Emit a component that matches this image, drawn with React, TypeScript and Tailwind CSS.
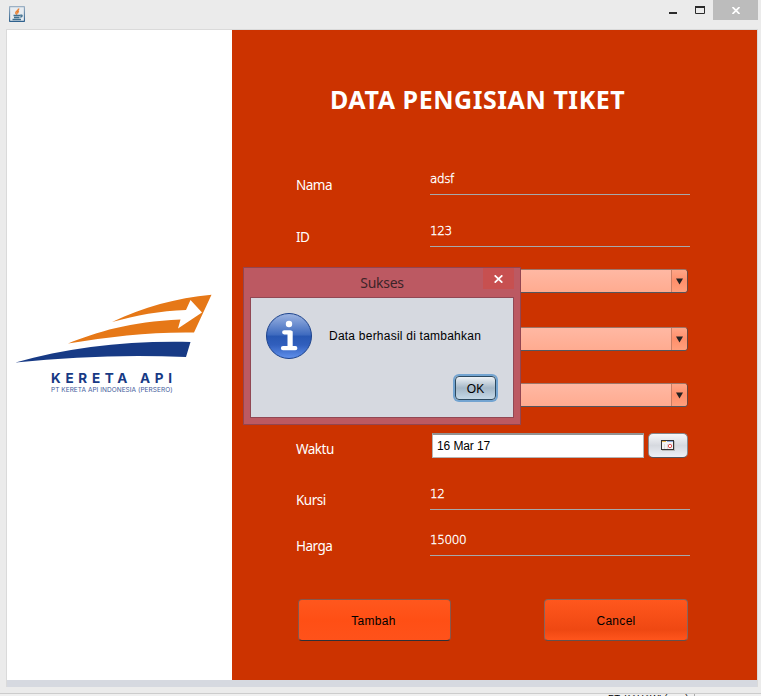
import type { ReactNode } from 'react';

const sans = "[font-family:'Liberation_Sans',Arial,sans-serif]";
const humanist = "[font-family:'Noto_Sans',sans-serif]";
const geometric = "[font-family:'DejaVu_Sans_Light','DejaVu_Sans',sans-serif]";
const grotesque = "[font-family:'Inter',sans-serif]";

function JavaIcon() {
  return (
    <svg width="16" height="16" viewBox="0 0 16 16">
      <defs>
        <linearGradient id="java-frame" x1="0" y1="0" x2="0" y2="1">
          <stop offset="0" stopColor="#9bb0c4" />
          <stop offset="1" stopColor="#2f618d" />
        </linearGradient>
      </defs>
      <rect x="0.5" y="0.5" width="15" height="15" rx="1" fill="#e7ecf1" stroke="url(#java-frame)" strokeWidth="1.300" />
      <path d="M9.700 2.500C10 4.500 6.500 5 6.800 7c.1.7.7 1 1.100 1.600M9.800 5C8.500 5.700 8.400 6.500 8.900 7.500" fill="none" stroke="#ea8132" strokeWidth="1.500" />
      <path d="M4.500 9.500h7M5 11.500h5.500M3.500 13.500h8.500M11.500 9.200c2.200-.7 2.200 1.800-.3 2" fill="none" stroke="#41708f" strokeWidth="1.300" />
    </svg>
  );
}

function Logo() {
  return (
    <svg width="200" height="70" viewBox="15 293 200 70">
      <path d="M112 322C143 307 176 298 211.500 294.700L194 332.500C151 331.800 111 336.500 68 343.500C97 332 130 321.500 180.500 319.500L178 328.500L202 312.500L190.500 300L186 310C160 310.800 136 315.500 112 322Z" fill="#e67817" />
      <path d="M15.500 362.500C67 348 126 340.500 190.500 342L186 357C129 354.500 73 356.500 15.500 362.500Z" fill="#173a85" />
    </svg>
  );
}

function InfoIcon() {
  return (
    <svg width="48" height="48" viewBox="0 0 48 48">
      <defs>
        <linearGradient id="info-fill" x1="0" y1="0" x2="0" y2="1">
          <stop offset="0" stopColor="#9eb5e2" />
          <stop offset="0.480" stopColor="#3d69be" />
          <stop offset="0.500" stopColor="#2857b2" />
          <stop offset="0.700" stopColor="#315fbd" />
          <stop offset="1" stopColor="#6191ec" />
        </linearGradient>
      </defs>
      <circle cx="24" cy="24" r="22.500" fill="url(#info-fill)" stroke="#1d438c" />
      <circle cx="24" cy="12" r="3.200" fill="#fff" />
      <path d="M19.200 20.300H25.300V36M18 36.200H30.300" fill="none" stroke="#fff" strokeWidth="4.200" strokeLinecap="round" strokeLinejoin="round" />
      <rect x="22.500" y="19" width="5" height="18" fill="#fff" />
    </svg>
  );
}

function CalendarIcon() {
  return (
    <svg width="14" height="11" viewBox="0 0 14 11">
      <rect x="1" y="1" width="13" height="10" fill="#bbb" />
      <rect x="0.500" y="0.500" width="12" height="9" fill="#f4f4f4" stroke="#333" />
      <path d="M1 1.500H5" stroke="#e7b64c" />
      <path d="M6 1.500H12" stroke="#8eaade" />
      <path d="M3.500 4V9M6.500 4V9" stroke="#ddd" />
      <circle cx="9" cy="6" r="1.700" fill="#fff" stroke="#e05555" />
    </svg>
  );
}

function Row({ label, className, children }: { label: string; className: string; children: ReactNode }) {
  return (
    <div className={`flex items-end ${className}`}>
      <label className={`w-[134px] shrink-0 text-[13.500px] leading-5 tracking-[-0.500px] text-white ${humanist}`}>{label}</label>
      {children}
    </div>
  );
}

function Underlined({ value }: { value: string }) {
  return (
    <div className={`h-[30px] w-[260px] border-b border-[#a5a9ac] pt-[4px] text-[12px] leading-5 font-extralight tracking-[-0.4px] text-white [-webkit-text-stroke:0.35px_white] ${geometric}`}>
      {value}
    </div>
  );
}

function Combo() {
  return (
    <div className="flex h-[24px] w-[258px] overflow-hidden rounded border border-t-[#9d7669] border-r-[#694840] border-b-[#52565e] border-l-[#694840] bg-linear-to-b from-[#ffb8a3] to-[#ffab90]">
      <div className="flex-1" />
      <div className="flex w-4 items-center justify-center border-l border-[#c97e65] bg-linear-to-b from-[#ffa587] via-[#ff8f6b] to-[#ff9f7c]">
        <svg width="7" height="7" viewBox="0 0 7 7"><path d="M0 .5H7L3.500 6.500Z" fill="#222" /></svg>
      </div>
    </div>
  );
}

function Dialog() {
  return (
    <div className="absolute top-[267px] left-[243px] flex h-[158px] w-[278px] flex-col border border-[#934550] bg-[#bc5962] px-[6px] pb-[6px]">
      <div className="flex h-[29px] items-start">
        <div className={`flex-1 pt-[5px] pl-[31px] text-center text-[14px] leading-5 tracking-[-0.3px] text-[#3c2428] ${humanist}`}>Sukses</div>
        <div className="flex h-[21px] w-[31px] items-center justify-center bg-[#c75050] pt-px">
          <svg width="9" height="8" viewBox="0 0 9 8"><path d="M.7 .3L8.300 7.700M8.300 .3L.7 7.700" stroke="#fff" strokeWidth="1.700" /></svg>
        </div>
      </div>
      <div className={`flex-1 border border-[#914854] bg-[#d6d9e0] pt-[14px] pr-[17px] pl-[14px] ${sans}`}>
        <div className="flex h-12 items-center">
          <div className="w-12 shrink-0"><InfoIcon /></div>
          <span className="ml-4 text-[12px] leading-4 tracking-[0.23px] whitespace-nowrap text-black">Data berhasil di tambahkan</span>
        </div>
        <div className="mt-4 flex justify-end">
          <button className="h-[24px] w-[41px] rounded border border-[#2c4960] bg-linear-to-b from-[#eef2f6] via-[#a4b7c7] to-[#c5d9e8] pt-px text-[12px] leading-4 text-black ring-2 ring-[#73a4d1]">OK</button>
        </div>
      </div>
    </div>
  );
}

export default function App() {
  return (
    <div className="relative flex h-[696px] w-[761px] flex-col overflow-hidden bg-[#ebebeb]">
      <header className="flex h-[29px] items-start pl-[9px]">
        <div className="mt-[6px] flex-1"><JavaIcon /></div>
        <svg className="mt-[6px] mr-[7px]" width="37" height="9" viewBox="0 0 37 9">
          <path d="M0 7H8" stroke="#2b2b2b" strokeWidth="2" />
          <path d="M26.500 1V7.500H35.500V1" fill="none" stroke="#2b2b2b" strokeWidth="1" />
          <path d="M26 1H36" stroke="#2b2b2b" strokeWidth="2" />
        </svg>
        <div className="mr-[3px] flex h-5 w-[45px] items-center justify-center bg-[#bcbcbc]">
          <svg width="8" height="7" viewBox="0 0 8 7"><path d="M.5 0L7.500 7M7.500 0L.5 7" stroke="#fff" strokeWidth="1.700" /></svg>
        </div>
      </header>

      <main className="mr-[3px] ml-[6px] flex h-[651px] border border-b-0 border-[#dadada]">
        <aside className="flex w-[225px] flex-col bg-white pt-[263px]">
          <div className="ml-2 h-[70px]"><Logo /></div>
          <div className={`mt-[8px] ml-[44px] text-[13.500px] leading-[14px] font-bold tracking-[4.700px] whitespace-nowrap text-[#173a85] ${grotesque}`}>KERETA API</div>
          <div className={`mt-[2px] ml-[44px] text-[6.500px] leading-[7px] tracking-[0.04px] whitespace-nowrap text-[#435b9b] ${grotesque}`}>PT KERETA API INDONESIA (PERSERO)</div>
        </aside>
        <section className="flex flex-1 flex-col bg-[#cc3300] pr-[67px] pl-[64px]">
          <h1 className={`mt-[52px] h-[35px] pl-[34px] text-[25px] leading-[34px] font-bold tracking-[0.550px] whitespace-nowrap text-white ${humanist}`}>DATA PENGISIAN TIKET</h1>
          <Row label="Nama" className="mt-[48px]"><Underlined value="adsf" /></Row>
          <Row label="ID" className="mt-[22px]"><Underlined value="123" /></Row>
          <Row label="Dari" className="mt-[22px]"><Combo /></Row>
          <Row label="Tujuan" className="mt-[34px]"><Combo /></Row>
          <Row label="Kelas" className="mt-[32px]"><Combo /></Row>
          <Row label="Waktu" className="mt-[26px] h-[26px]">
            <div className={`mb-px ml-[2px] h-[25px] w-[212px] border border-t-2 border-[#b5b5b5] border-t-[#929292] bg-white pl-[4px] text-[12px] leading-[23px] tracking-[-0.1px] text-black ${sans}`}>16 Mar 17</div>
            <button className="mb-px ml-1 flex h-[25px] w-[40px] shrink-0 items-center justify-center rounded-[5px] border border-[#84888e] border-b-[#53565e] bg-linear-to-b from-[#f6f7fa] via-[#d6d9df] to-[#edf0f7]"><CalendarIcon /></button>
          </Row>
          <Row label="Kursi" className="mt-[21px]"><Underlined value="12" /></Row>
          <Row label="Harga" className="mt-[16px]"><Underlined value="15000" /></Row>
          <div className={`mt-[43px] flex justify-between pr-[2px] pl-[2px] text-[12px] text-black ${sans}`}>
            <button className="h-[42px] w-[153px] rounded border border-[#88574b] border-b-[#2d3038] bg-linear-to-b from-[#ff571d] via-[#ff4f15] to-[#ff521a] pt-[2px] pr-[2px] tracking-[0.3px]">Tambah</button>
            <button className="h-[42px] w-[144px] rounded border border-[#88655d] border-b-[#62504d] bg-linear-to-b from-[#ff571d] via-[#ef4812] via-75% to-[#ff551c] pt-[2px] tracking-[0.3px]">Cancel</button>
          </div>
        </section>
      </main>
      <div className="mr-[3px] ml-[6px] h-[7px] border-x border-[#dadada] bg-[#d6d9e0]" />
      <footer className="mt-[6px] h-[3px] overflow-hidden border-t border-[#ccc] bg-[#f0f0f0]">
        <div className={`ml-[608px] h-[2px] w-[87px] overflow-hidden border-r border-[#aaa] text-[9.500px] leading-[8px] whitespace-nowrap text-black ${sans}`}>PT. KAHAWI (pvm)</div>
      </footer>
      <Dialog />
    </div>
  );
}
